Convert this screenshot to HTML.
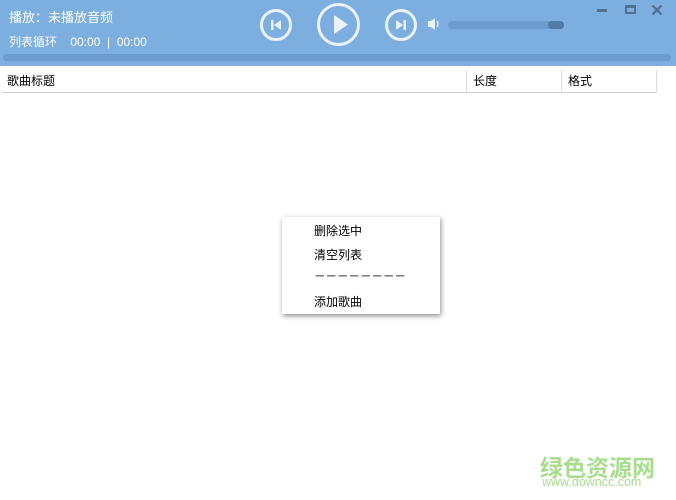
<!DOCTYPE html>
<html><head><meta charset="utf-8"><style>
body{margin:0;width:676px;height:500px;background:#fff;position:relative;overflow:hidden;font-family:"Liberation Sans","Noto Sans CJK SC",sans-serif;font-size:12px}
.hd{position:absolute;left:0;top:0;width:676px;height:66px;background:#7caee0}
.t{position:absolute;color:#fff;white-space:nowrap}
.bar{position:absolute;left:3px;top:54px;width:668px;height:7px;border-radius:4px;background:#6b9ccd}
.c{position:absolute;border:3px solid #eaf2fb;border-radius:50%;box-sizing:border-box}
.th{position:absolute;top:68px;height:24px;line-height:24px;border-bottom:1px solid #d0d0d0;color:#000}
.sep{position:absolute;top:70px;width:1px;height:22px;background:#ddd}
.menu{position:absolute;left:282px;top:217px;width:158px;height:97px;background:#fff;box-shadow:1px 2px 5px rgba(0,0,0,.45)}
.mi{position:absolute;left:32px;font-size:12px;color:#000}
</style></head><body>
<div class="hd">
<div class="t" style="left:9px;top:7px;font-size:13px">播放：未播放音频</div>
<div class="t" style="left:9px;top:33px">列表循环&nbsp;&nbsp;&nbsp;&nbsp;00:00&nbsp;&nbsp;|&nbsp;&nbsp;00:00</div>
<div class="bar"></div>
<div class="c" style="left:260px;top:9px;width:32px;height:32px"></div>
<svg style="position:absolute;left:260px;top:9px" width="32" height="32"><rect x="11" y="11" width="2.5" height="10" fill="#eaf2fb"/><path d="M21 11 L14 16 L21 21Z" fill="#eaf2fb"/></svg>
<div class="c" style="left:317px;top:3px;width:43px;height:43px"></div>
<svg style="position:absolute;left:317px;top:3px" width="43" height="43"><path d="M17 12 L31 21.5 L17 31Z" fill="#eaf2fb"/></svg>
<div class="c" style="left:385px;top:9px;width:32px;height:32px"></div>
<svg style="position:absolute;left:385px;top:9px" width="32" height="32"><path d="M11 11 L18 16 L11 21Z" fill="#eaf2fb"/><rect x="18.5" y="11" width="2.5" height="10" fill="#eaf2fb"/></svg>
<svg style="position:absolute;left:427px;top:17px" width="16" height="14"><rect x="1" y="4" width="3" height="6" fill="#eaf2fb"/><path d="M4 4 L8 1 L8 13 L4 10Z" fill="#eaf2fb"/><path d="M10 4 Q12 7 10 10" stroke="#eaf2fb" fill="none" stroke-width="1.3"/></svg>
<div style="position:absolute;left:448px;top:21px;width:116px;height:8px;border-radius:4px;background:#6b9ccd"></div>
<div style="position:absolute;left:548px;top:21px;width:16px;height:8px;border-radius:4px;background:#4f79a6"></div>
<div style="position:absolute;left:597px;top:9px;width:10px;height:3px;background:#4f6f93"></div>
<div style="position:absolute;left:625px;top:5px;width:11px;height:9px;box-sizing:border-box;border:2px solid #4f6f93;border-top-width:3px"></div>
<svg style="position:absolute;left:651px;top:4px" width="12" height="12"><path d="M1.5 1.5 L10.5 10.5 M10.5 1.5 L1.5 10.5" stroke="#4f6f93" stroke-width="2.2"/></svg>
</div>
<div class="th" style="left:2px;width:655px"></div>
<div class="t" style="left:7px;top:72px;color:#000">歌曲标题</div>
<div class="t" style="left:473px;top:72px;color:#000">长度</div>
<div class="t" style="left:568px;top:72px;color:#000">格式</div>
<div class="sep" style="left:466px"></div>
<div class="sep" style="left:561px"></div>
<div class="sep" style="left:656px"></div>
<div class="menu">
<div class="mi" style="top:5px">删除选中</div>
<div class="mi" style="top:29px">清空列表</div>
<div class="mi" style="top:51px;letter-spacing:0px;font-size:11.5px">－－－－－－－－</div>
<div class="mi" style="top:76px">添加歌曲</div>
</div>
<div class="t" style="left:540px;top:449px;color:#a9dd8e;font-size:23px;font-weight:bold">绿色资源网</div>
<div class="t" style="left:542px;top:475px;color:#a9dd8e;font-size:12.5px">www.downcc.com</div>
</body></html>
